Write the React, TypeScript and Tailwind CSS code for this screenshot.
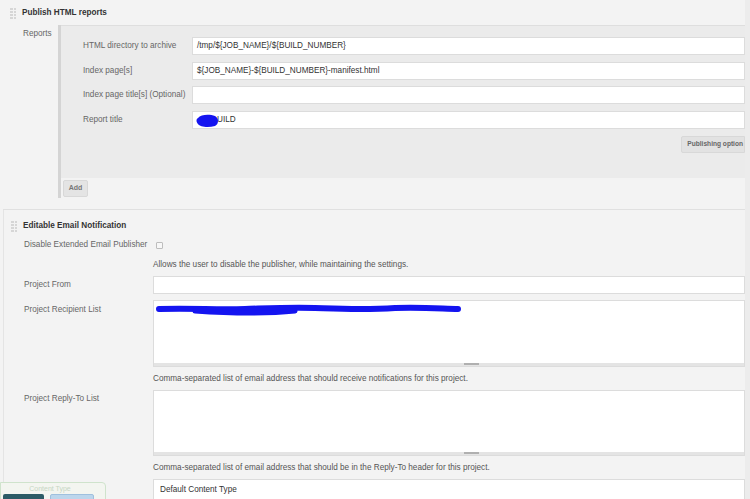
import React from "react";

const Handle = () => (
  <div className="grid grid-cols-2 gap-[1px] w-[6px] mr-[6px]">
    {Array.from({ length: 8 }).map((_, i) => (
      <span key={i} className="block w-[2.5px] h-[2px] bg-[#d6d6d6]" />
    ))}
  </div>
);

const Field = ({ value, children }: { value?: string; children?: React.ReactNode }) => (
  <div className="relative h-[18px] bg-white border border-[#dcdcdc] flex items-center px-[4px] text-[8.2px] text-[#333] whitespace-nowrap">
    {value}
    {children}
  </div>
);

const TextBox = ({ h, children }: { h: string; children?: React.ReactNode }) => (
  <div className={`relative ${h} bg-white border border-[#dcdcdc] flex flex-col`}>
    <div className="flex-1">{children}</div>
    <div className="h-[3px] bg-[#e4e4e4] relative">
      <span className="absolute left-[310px] top-[0px] w-[15px] h-[2px] bg-[#b0b0b0]" />
    </div>
  </div>
);

const App = () => {
  return (
    <div className="w-[750px] h-[499px] overflow-hidden bg-[#ececec] font-['Liberation_Sans',Arial,sans-serif] relative">
      <div className="w-[745px] min-h-full bg-[#f3f3f3] flex flex-col">
        {/* Publish HTML reports */}
        <div className="h-[25px] shrink-0 flex items-center pl-[10px] pt-[2px]">
          <Handle />
          <span className="text-[8.2px] font-bold text-[#333]">Publish HTML reports</span>
        </div>
        <div className="flex">
          <div className="w-[35px] ml-[23px] pt-[3px] text-[8.2px] text-[#666]">Reports</div>
          <div className="flex-1 flex border-l-[3px] border-[#d4d4d4]">
            <div className="flex-1 flex flex-col">
              <div className="h-[153px] bg-[#ebebeb] border-t border-[#dedede] pt-[11px] flex flex-col">
                {[
                  ["HTML directory to archive", "/tmp/${JOB_NAME}/${BUILD_NUMBER}"],
                  ["Index page[s]", "${JOB_NAME}-${BUILD_NUMBER}-manifest.html"],
                  ["Index page title[s] (Optional)", ""],
                  ["Report title", "BUILD"],
                ].map(([label, val], i) => (
                  <div key={i} className="flex items-center h-[18px] mb-[6.7px] shrink-0">
                    <div className="w-[131px] pl-[22px] text-[8.2px] text-[#666] whitespace-nowrap">{label}</div>
                    <div className="flex-1">
                      {i === 3 ? (
                        <Field>
                          <span className="pl-[20px]">UILD</span>
                          <svg className="absolute left-[2px] top-[1px]" width="26" height="15" viewBox="0 0 26 15">
                            <path d="M3 5 C6 1,15 1,20 3 C24 5,24 11,20 13 C13 15,5 14,3 11 C1 9,1 6,3 5 Z" fill="#1414f0" />
                          </svg>
                        </Field>
                      ) : (
                        <Field value={val} />
                      )}
                    </div>
                  </div>
                ))}
                <div className="flex justify-end">
                  <div className="h-[17px] bg-[#e2e2e2] border border-[#d8d8d8] rounded-l-[2px] flex items-center pl-[5px] pr-[1px] text-[6.6px] font-bold text-[#666] whitespace-nowrap">
                    Publishing option
                  </div>
                </div>
              </div>
              <div className="pt-[2px] pl-[2px] pb-[1px]">
                <div className="w-[25px] h-[17px] bg-[#e4e4e4] border border-[#d8d8d8] rounded-[2px] flex items-center justify-center text-[7px] font-bold text-[#777]">
                  Add
                </div>
              </div>
            </div>
          </div>
        </div>
        <div className="h-[11px] shrink-0" />
        <div className="ml-[3px] border-t border-[#e0e0e0]" />

        {/* Editable Email Notification */}
        <div className="flex-1 ml-[3px] border-l border-[#e4e4e4] flex flex-col">
          <div className="h-[28px] shrink-0 flex items-center pl-[7px] pt-[4px]">
            <Handle />
            <span className="text-[8.2px] font-bold text-[#333]">Editable Email Notification</span>
          </div>
          <div className="flex items-center h-[14px] pl-[20px]">
            <div className="w-[132px] text-[8.2px] text-[#666] whitespace-nowrap">Disable Extended Email Publisher</div>
            <span className="w-[7px] h-[7px] border border-[#bdbdbd] bg-[#f7f7f7] rounded-[1px]" />
          </div>
          <div className="h-[14px] mt-[6px] pl-[149px] flex items-center text-[8.2px] text-[#555] whitespace-nowrap">
            Allows the user to disable the publisher, while maintaining the settings.
          </div>
          <div className="flex items-center mt-[4px] pl-[20px]">
            <div className="w-[129px] text-[8.2px] text-[#666]">Project From</div>
            <div className="flex-1">
              <Field />
            </div>
          </div>
          <div className="flex mt-[6px] pl-[20px]">
            <div className="w-[129px] pt-[4px] text-[8.2px] text-[#666]">Project Recipient List</div>
            <div className="flex-1">
              <TextBox h="h-[67px]">
                <svg className="absolute left-[1px] top-[1px]" width="310" height="16" viewBox="0 0 310 16">
                  <path
                    d="M4 7 C40 6,60 8,90 7 C120 6,140 5,160 6 C190 7,210 8,240 6 C270 5,290 7,303 7"
                    stroke="#1414f0"
                    strokeWidth="6"
                    strokeLinecap="round"
                    fill="none"
                  />
                  <path d="M40 9 C70 11,110 12,140 9" stroke="#1414f0" strokeWidth="5" strokeLinecap="round" fill="none" />
                </svg>
              </TextBox>
            </div>
          </div>
          <div className="h-[12px] mt-[6px] pl-[149px] flex items-center text-[8.2px] text-[#555] whitespace-nowrap">
            Comma-separated list of email address that should receive notifications for this project.
          </div>
          <div className="flex mt-[5px] pl-[20px]">
            <div className="w-[129px] pt-[3px] text-[8.2px] text-[#666]">Project Reply-To List</div>
            <div className="flex-1">
              <TextBox h="h-[66px]" />
            </div>
          </div>
          <div className="h-[12px] mt-[6px] pl-[149px] flex items-center text-[8.2px] text-[#555] whitespace-nowrap">
            Comma-separated list of email address that should be in the Reply-To header for this project.
          </div>
          <div className="flex mt-[5px] pl-[20px]">
            <div className="w-[129px]" />
            <div className="flex-1">
              <div className="h-[22px] bg-white border border-[#dcdcdc] flex items-center px-[6px] text-[8.2px] text-[#333]">
                Default Content Type
              </div>
            </div>
          </div>
        </div>
      </div>

      {/* floating content type tab */}
      <div className="absolute left-0 top-[482px] w-[106px] h-[20px] bg-[#f3f5f0] border border-[#cfe3cc] rounded-tr-[4px]">
        <div className="text-center text-[7px] text-[#c6d6c4] leading-[11px] pr-[6px]">Content Type</div>
        <div className="flex gap-[6px] pl-[2px]">
          <span className="w-[41px] h-[8px] bg-[#2c5b66] rounded-t-[2px]" />
          <span className="w-[44px] h-[8px] bg-[#bcd6ec] border border-[#9fc0de] rounded-t-[2px]" />
        </div>
      </div>
    </div>
  );
};

export default App;
